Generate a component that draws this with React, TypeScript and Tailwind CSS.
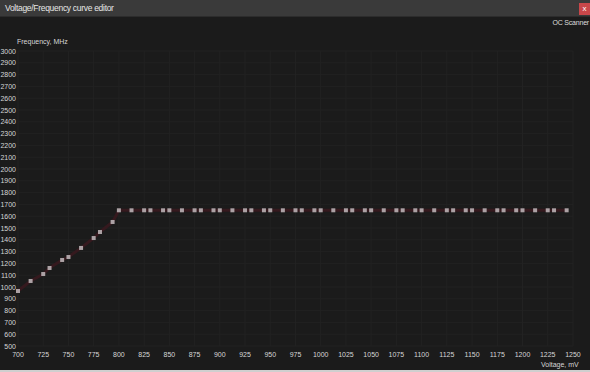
const X0 = 18;
const PX_PER_MV = 1.009;
const Y0 = 51;
const PX_PER_MHZ = 0.118;

const vx = (mv: number) => X0 + (mv - 700) * PX_PER_MV;
const fy = (mhz: number) => Y0 + (3000 - mhz) * PX_PER_MHZ;

// voltage steps repeat every 50 mV
const steps = [0, 12.5, 25, 31.25, 43.75];
const voltages: number[] = [];
for (let base = 700; base < 1250; base += 50) {
  steps.forEach((s) => voltages.push(base + s));
}

const rising = [966, 1051, 1110, 1161, 1229, 1254, 1331, 1415, 1466, 1551];

const points = voltages.map((v, i) => ({
  x: vx(v),
  y: i < rising.length ? fy(rising[i]) : fy(1650),
}));

const freqTicks = Array.from({ length: 26 }, (_, i) => 3000 - i * 100);
const voltTicks = Array.from({ length: 23 }, (_, i) => 700 + i * 25);

function CurveChart() {
  const line = points.map((p) => `${p.x.toFixed(1)},${p.y.toFixed(1)}`).join(" ");
  return (
    <svg width={590} height={340} viewBox="0 30 590 340" className="block">
      {/* grid */}
      {freqTicks.map((f) => (
        <line key={`h${f}`} x1={X0} x2={vx(1250)} y1={fy(f)} y2={fy(f)} stroke="#222222" strokeWidth={1} />
      ))}
      {voltTicks.map((v) => (
        <line key={`v${v}`} x1={vx(v)} x2={vx(v)} y1={fy(3000)} y2={fy(500)} stroke="#222222" strokeWidth={1} />
      ))}

      {/* curve */}
      <polyline points={line} fill="none" stroke="#35191e" strokeWidth={3} />
      {points.map((p, i) => (
        <rect key={i} x={p.x - 2} y={p.y - 2} width={4} height={4} fill="#aca2a5" />
      ))}

      {/* axis labels */}
      <g fill="#d6d6d6" fontSize={7} fontFamily="'Liberation Sans', Arial, sans-serif">
        <text x={17} y={44}>Frequency, MHz</text>
        {freqTicks.map((f) => (
          <text key={`fl${f}`} x={16} y={fy(f) + 2.5} textAnchor="end">
            {f}
          </text>
        ))}
        {voltTicks.map((v) => (
          <text key={`vl${v}`} x={vx(v)} y={357} textAnchor="middle">
            {v}
          </text>
        ))}
        <text x={541} y={367}>Voltage, mV</text>
      </g>
    </svg>
  );
}

export default function App() {
  return (
    <div className="w-[590px] h-[372px] bg-[#1b1b1b] flex flex-col overflow-hidden font-['Liberation_Sans',Arial,sans-serif]">
      <div className="h-[17px] shrink-0 bg-[#3a3a3a] border-b border-[#2c2c2c] flex items-center justify-between pl-[5px] pr-0">
        <span className="text-[8.5px] tracking-[-0.3px] text-[#e6e6e6] leading-none">Voltage/Frequency curve editor</span>
        <button className="w-[11px] h-[12px] mt-[2px] bg-[#c8474a] text-white text-[8px] leading-none flex items-center justify-center">
          x
        </button>
      </div>
      <div className="h-[13px] shrink-0 flex items-center justify-end pr-px">
        <span className="text-[7px] tracking-[-0.2px] text-[#dcdcdc] whitespace-nowrap">OC Scanner</span>
      </div>
      <CurveChart />
      <div className="h-[2px] shrink-0 bg-[#cfcfcf]" />
    </div>
  );
}
